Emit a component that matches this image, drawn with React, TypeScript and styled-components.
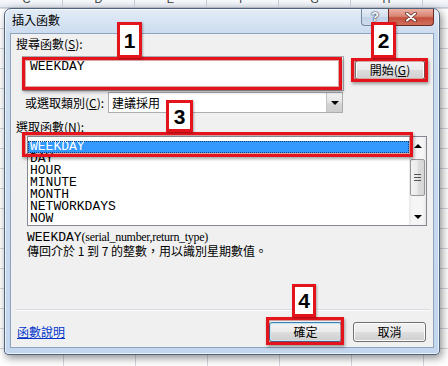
import React from 'react'
import styled, { createGlobalStyle } from 'styled-components'

const ui = `"Noto Sans CJK TC", "Noto Sans", sans-serif`
const mono = `"Liberation Mono", "Noto Sans CJK TC", monospace`
const serif = `"Liberation Serif", "Noto Sans CJK TC", serif`
const red = '#e3141c'

const GlobalStyle = createGlobalStyle`
	html, body {
		margin: 0;
		padding: 0;
		background: #fff;
	}
	body {
		font-family: ${ui};
		font-size: 12px;
	}
`

const columns = ['C', 'D', 'E', 'F', 'G', 'H', 'I']
const functions = ['WEEKDAY', 'DAY', 'HOUR', 'MINUTE', 'MONTH', 'NETWORKDAYS', 'NOW']

const App: React.FC = () => {
	return (
		<StyledPage>
			<GlobalStyle />
			<StyledHeaderRow>
				{columns.map((c) => (
					<StyledHeaderCell key={c}>
						<StyledHeaderLetter>{c}</StyledHeaderLetter>
					</StyledHeaderCell>
				))}
			</StyledHeaderRow>

			<StyledDialog>
				<StyledTitleBar>
					<StyledTitle>插入函數</StyledTitle>
					<StyledCaptionButtons>
						<StyledHelpButton>?</StyledHelpButton>
						<StyledCloseButton>
							<svg width="12" height="10" viewBox="0 0 12 10">
								<path d="M2 1.5 L10 8.5 M10 1.5 L2 8.5" stroke="#5a2a22" strokeWidth="3.6" strokeLinecap="round" />
								<path d="M2 1.5 L10 8.5 M10 1.5 L2 8.5" stroke="#fff" strokeWidth="2" strokeLinecap="round" />
							</svg>
						</StyledCloseButton>
					</StyledCaptionButtons>
				</StyledTitleBar>

				<StyledClient>
					<StyledLabel>
						搜尋函數(<u>S</u>):
					</StyledLabel>
					<StyledSearchRow>
						<StyledSearchBox>WEEKDAY</StyledSearchBox>
						<StyledButton $w={70} $gap={11} $top={4}>
							開始(<u>G</u>)
						</StyledButton>
					</StyledSearchRow>

					<StyledCategoryRow>
						<StyledCategoryLabel>
							或選取類別(<u>C</u>):
						</StyledCategoryLabel>
						<StyledCombo>
							<StyledComboText>建議採用</StyledComboText>
							<StyledComboArrow>
								<StyledTriangle $down />
							</StyledComboArrow>
						</StyledCombo>
					</StyledCategoryRow>

					<StyledLabel $top={7}>
						選取函數(<u>N</u>):
					</StyledLabel>
					<StyledListBox>
						<StyledListItems>
							{functions.map((f, i) => (
								<StyledListItem key={f} $selected={i === 0}>
									{f}
								</StyledListItem>
							))}
						</StyledListItems>
						<StyledScrollBar>
							<StyledScrollArrow>
								<StyledTriangle />
							</StyledScrollArrow>
							<StyledScrollTrack>
								<StyledThumb>
									<StyledGrip />
								</StyledThumb>
							</StyledScrollTrack>
							<StyledScrollArrow>
								<StyledTriangle $down />
							</StyledScrollArrow>
						</StyledScrollBar>
					</StyledListBox>

					<StyledDescription>
						<StyledSyntax>
							<StyledSyntaxName>WEEKDAY</StyledSyntaxName>(serial_number,return_type)
						</StyledSyntax>
						<div>傳回介於 1 到 7 的整數，用以識別星期數值。</div>
					</StyledDescription>

					<StyledSpacer />
					<StyledSeparator />

					<StyledFooter>
						<StyledHelpLink>函數說明</StyledHelpLink>
						<StyledFooterButtons>
							<StyledButton $w={73} $default>
								確定
							</StyledButton>
							<StyledButton $w={73}>取消</StyledButton>
						</StyledFooterButtons>
					</StyledFooter>
				</StyledClient>
			</StyledDialog>

			<StyledMark $x={22} $y={57} $w={320} $h={33} />
			<StyledMark $x={351} $y={58} $w={77} $h={24} />
			<StyledMark $x={22} $y={132} $w={391} $h={25} />
			<StyledMark $x={266} $y={317} $w={78} $h={28} />

			<StyledBadge $x={117} $y={22} $w={25} $h={36}>1</StyledBadge>
			<StyledBadge $x={371} $y={22} $w={25} $h={36}>2</StyledBadge>
			<StyledBadge $x={166} $y={100} $w={27} $h={32}>3</StyledBadge>
			<StyledBadge $x={292} $y={284} $w={24} $h={33}>4</StyledBadge>
		</StyledPage>
	)
}

const StyledPage = styled.div`
	position: relative;
	width: 448px;
	height: 366px;
	overflow: hidden;
	background-color: #fff;
	background-image: linear-gradient(to right, #d5d9df 1px, transparent 1px),
		linear-gradient(to bottom, #d5d9df 1px, transparent 1px);
	background-size: 72px 20px;
	background-position: 63px 0, 0 8px;
`

const StyledHeaderRow = styled.div`
	display: flex;
	height: 8px;
	margin-left: -9px;
	overflow: hidden;
	background: linear-gradient(#f7f9fc, #e4e9f0);
	border-bottom: 1px solid #c6ccd6;
	box-sizing: border-box;
`

const StyledHeaderCell = styled.div`
	flex: 0 0 72px;
	box-sizing: border-box;
	border-right: 1px solid #c5cad2;
	display: flex;
	align-items: flex-end;
	justify-content: center;
`

const StyledHeaderLetter = styled.span`
	font: 11px/16px 'Liberation Sans', sans-serif;
	color: #3a3a3a;
	flex-shrink: 0;
`

const StyledDialog = styled.div`
	margin-left: 4px;
	width: 436px;
	height: 347px;
	box-sizing: border-box;
	border: 1px solid #50647e;
	border-radius: 7px 7px 4px 4px;
	background: linear-gradient(to bottom, #e3ecf7 0, #ccdcef 24px, #c2d6ed 100%);
	box-shadow: 2px 3px 8px rgba(0, 0, 0, 0.45), inset 0 0 0 1px rgba(255, 255, 255, 0.65);
	display: flex;
	flex-direction: column;
	padding: 0 5px 6px;
`

const StyledTitleBar = styled.div`
	height: 24px;
	display: flex;
	align-items: flex-start;
	justify-content: space-between;
`

const StyledTitle = styled.div`
	margin: 4px 0 0 2px;
	line-height: 14px;
	font-size: 12px;
	color: #000;
`

const StyledCaptionButtons = styled.div`
	display: flex;
	height: 17px;
`

const StyledHelpButton = styled.div`
	width: 27px;
	box-sizing: border-box;
	border: 1px solid #7388a3;
	border-top: none;
	border-right: none;
	border-radius: 0 0 0 4px;
	background: linear-gradient(#e8eef6, #d3dfee 50%, #c3d3e8 51%, #cfdcee);
	color: #fff;
	font: bold 13px/16px 'Liberation Sans', sans-serif;
	text-align: center;
	text-shadow: 0 0 1px #34465e, 0 0 1px #34465e, 0 0 2px #34465e;
`

const StyledCloseButton = styled.div`
	width: 46px;
	box-sizing: border-box;
	border: 1px solid #6b2b22;
	border-top: none;
	border-radius: 0 0 4px 0;
	background: linear-gradient(#ebb0a3, #d98675 45%, #c4503d 55%, #d0705c);
	display: flex;
	align-items: center;
	justify-content: center;
`

const StyledClient = styled.div`
	flex: 1;
	border: 1px solid #8ea4be;
	background: #f0f0f0;
	display: flex;
	flex-direction: column;
`

const StyledLabel = styled.div<{ $top?: number }>`
	margin: ${(p) => p.$top ?? 3}px 0 0 5px;
	height: 14px;
	line-height: 14px;
	color: #000;
	white-space: nowrap;
`

const StyledSearchRow = styled.div`
	display: flex;
	align-items: flex-start;
	margin-top: 5px;
	height: 35px;
`

const StyledSearchBox = styled.div`
	margin-left: 11px;
	width: 322px;
	height: 35px;
	box-sizing: border-box;
	border: 1px solid #abadb3;
	background: #fff;
	padding: 3px 7px;
	font: 13px/14px ${mono};
	color: #000;
`

const StyledButton = styled.button<{ $w: number; $gap?: number; $top?: number; $default?: boolean }>`
	width: ${(p) => p.$w}px;
	height: 20px;
	margin: ${(p) => p.$top ?? 0}px 0 0 ${(p) => p.$gap ?? 0}px;
	padding: 0;
	box-sizing: border-box;
	border: 1px solid ${(p) => (p.$default ? '#3c7fb1' : '#707070')};
	border-radius: 3px;
	background: linear-gradient(#f2f2f2 0%, #ebebeb 50%, #dddddd 51%, #cfcfcf 100%);
	box-shadow: inset 0 0 0 1px ${(p) => (p.$default ? '#bfe4f6' : '#fcfcfc')};
	font: 12px/18px ${ui};
	color: #000;
	text-align: center;
`

const StyledCategoryRow = styled.div`
	display: flex;
	align-items: center;
	margin-top: 1px;
	height: 21px;
`

const StyledCategoryLabel = styled.div`
	width: 97px;
	box-sizing: border-box;
	padding-left: 14px;
	line-height: 14px;
	white-space: nowrap;
`

const StyledCombo = styled.div`
	width: 235px;
	height: 21px;
	box-sizing: border-box;
	border: 1px solid #abadb3;
	background: #fff;
	display: flex;
	align-items: center;
`

const StyledComboText = styled.span`
	padding-left: 3px;
	line-height: 14px;
`

const StyledComboArrow = styled.div`
	margin-left: auto;
	width: 16px;
	height: 19px;
	box-sizing: border-box;
	border-left: 1px solid #c3c3c3;
	background: linear-gradient(#f3f3f3, #e3e3e3 50%, #d5d5d5 51%, #cdcdcd);
	display: flex;
	align-items: center;
	justify-content: center;
`

const StyledTriangle = styled.span<{ $down?: boolean }>`
	width: 0;
	height: 0;
	border-left: 4px solid transparent;
	border-right: 4px solid transparent;
	${(p) => (p.$down ? 'border-top: 4px solid #000;' : 'border-bottom: 4px solid #000;')}
`

const StyledListBox = styled.div`
	margin: 2px 0 0 16px;
	width: 400px;
	height: 90px;
	box-sizing: border-box;
	border: 1px solid #828790;
	background: #fff;
	display: flex;
`

const StyledListItems = styled.div`
	flex: 1;
	padding-top: 4px;
`

const StyledListItem = styled.div<{ $selected?: boolean }>`
	height: 12px;
	box-sizing: border-box;
	padding-left: 2px;
	font: 13px/12px ${mono};
	color: ${(p) => (p.$selected ? '#fff' : '#000')};
	background: ${(p) => (p.$selected ? '#3399ff' : 'transparent')};
	outline: ${(p) => (p.$selected ? '1px dotted #0d3f73' : 'none')};
	outline-offset: -1px;
`

const StyledScrollBar = styled.div`
	width: 17px;
	display: flex;
	flex-direction: column;
	background: linear-gradient(to right, #e8e8e8, #f5f5f5 20%, #f5f5f5 80%, #e8e8e8);
`

const StyledScrollArrow = styled.div`
	height: 17px;
	display: flex;
	align-items: center;
	justify-content: center;
`

const StyledScrollTrack = styled.div`
	flex: 1;
	padding: 5px 1px 0;
`

const StyledThumb = styled.div`
	height: 37px;
	box-sizing: border-box;
	border: 1px solid #979797;
	border-radius: 2px;
	background: linear-gradient(to right, #f4f4f4, #e9e9e9 50%, #dcdcdc 51%, #d6d6d6);
	display: flex;
	align-items: center;
	justify-content: center;
`

const StyledGrip = styled.span`
	width: 7px;
	height: 5px;
	border-top: 1px solid #555;
	border-bottom: 1px solid #555;
	background: linear-gradient(#555, #555) center / 7px 1px no-repeat;
`

const StyledDescription = styled.div`
	margin: 5px 0 0 16px;
	line-height: 13px;
	color: #000;
	white-space: nowrap;
`

const StyledSyntax = styled.div`
	font: 12px/13px ${serif};
	letter-spacing: -0.3px;
`

const StyledSyntaxName = styled.span`
	font: 13px/13px ${mono};
	letter-spacing: 0;
`

const StyledSpacer = styled.div`
	flex: 1;
`

const StyledSeparator = styled.div`
	margin: 0 3px 0 5px;
	border-top: 1px solid #d8dde3;
	border-bottom: 1px solid #fbfbfb;
`

const StyledFooter = styled.div`
	display: flex;
	align-items: center;
	height: 20px;
	margin: 11px 7px 5px 6px;
`

const StyledHelpLink = styled.a`
	color: #0033cc;
	text-decoration: underline;
	line-height: 14px;
	cursor: pointer;
`

const StyledFooterButtons = styled.div`
	margin-left: auto;
	display: flex;
	gap: 11px;
`

const StyledMark = styled.div<{ $x: number; $y: number; $w: number; $h: number }>`
	position: absolute;
	left: ${(p) => p.$x}px;
	top: ${(p) => p.$y}px;
	width: ${(p) => p.$w}px;
	height: ${(p) => p.$h}px;
	box-sizing: border-box;
	border: 3px solid ${red};
	box-shadow: 1px 2px 3px rgba(0, 0, 0, 0.35), inset 0 0 0 1px rgba(150, 0, 0, 0.35);
	pointer-events: none;
`

const StyledBadge = styled.div<{ $x: number; $y: number; $w: number; $h: number }>`
	position: absolute;
	left: ${(p) => p.$x}px;
	top: ${(p) => p.$y}px;
	width: ${(p) => p.$w}px;
	height: ${(p) => p.$h}px;
	box-sizing: border-box;
	border: 3px solid ${red};
	background: #fff;
	box-shadow: 1px 1px 2px rgba(0, 0, 0, 0.3);
	display: flex;
	align-items: center;
	justify-content: center;
	font: bold 21px/1 'Liberation Sans', sans-serif;
	color: #000;
`

export default App
